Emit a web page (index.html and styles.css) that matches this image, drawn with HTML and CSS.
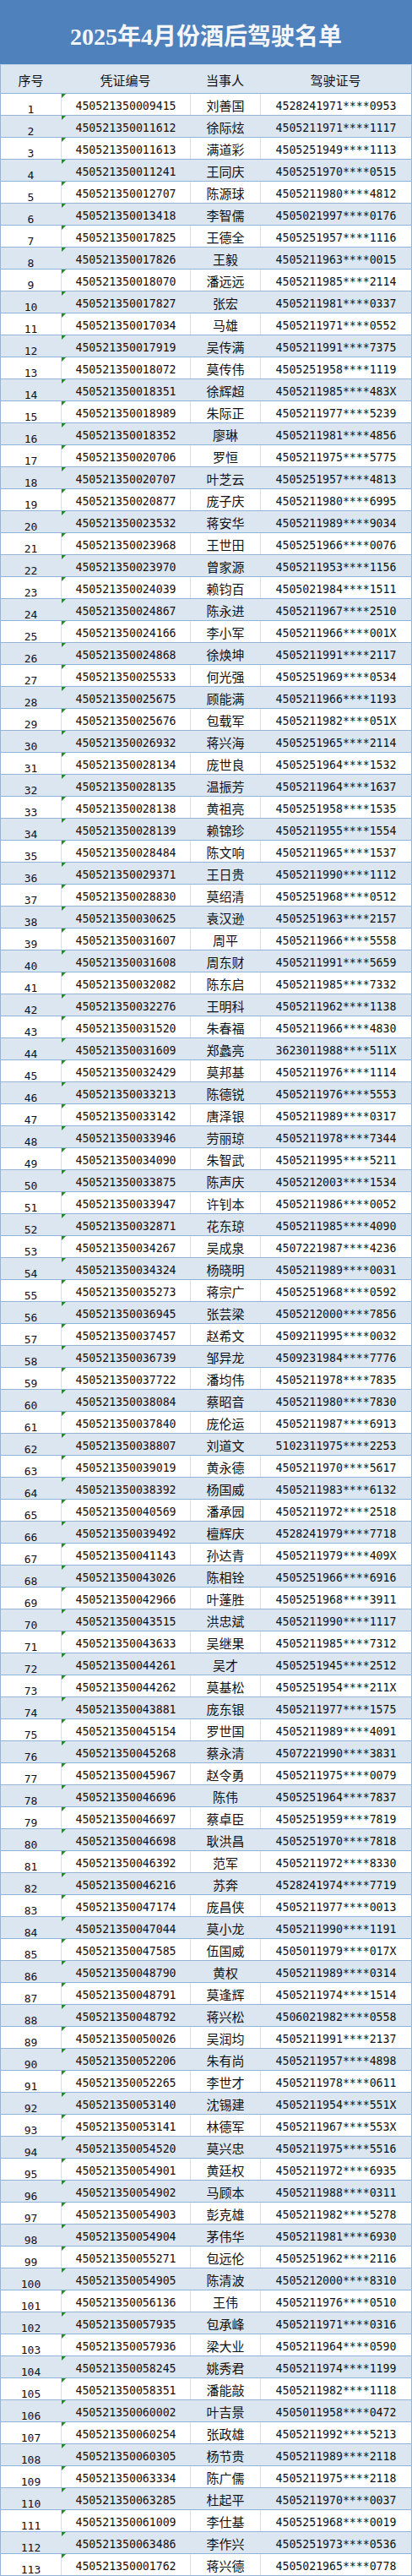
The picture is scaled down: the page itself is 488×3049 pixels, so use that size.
FILE: index.html
```html
<!DOCTYPE html>
<html lang="zh-CN">
<head>
<meta charset="utf-8">
<title>2025年4月份酒后驾驶名单</title>
<link rel="stylesheet" href="styles.css">
</head>
<body>
<div class="sheet">
  <div class="title">2025年4月份酒后驾驶名单</div>
  <div class="head">
    <div class="cell">序号</div>
    <div class="cell">凭证编号</div>
    <div class="cell">当事人</div>
    <div class="cell">驾驶证号</div>
  </div>
  <div class="row"><div class="cell no">1</div><div class="cell num cert">450521350009415</div><div class="cell name">刘善国</div><div class="cell num">4528241971****0953</div></div>
  <div class="row alt"><div class="cell no">2</div><div class="cell num cert">450521350011612</div><div class="cell name">徐际炫</div><div class="cell num">4505211971****1117</div></div>
  <div class="row"><div class="cell no">3</div><div class="cell num cert">450521350011613</div><div class="cell name">满道彩</div><div class="cell num">4505251949****1113</div></div>
  <div class="row alt"><div class="cell no">4</div><div class="cell num cert">450521350011241</div><div class="cell name">王同庆</div><div class="cell num">4505251970****0515</div></div>
  <div class="row"><div class="cell no">5</div><div class="cell num cert">450521350012707</div><div class="cell name">陈源球</div><div class="cell num">4505211980****4812</div></div>
  <div class="row alt"><div class="cell no">6</div><div class="cell num cert">450521350013418</div><div class="cell name">李智儒</div><div class="cell num">4505021997****0176</div></div>
  <div class="row"><div class="cell no">7</div><div class="cell num cert">450521350017825</div><div class="cell name">王德全</div><div class="cell num">4505251957****1116</div></div>
  <div class="row alt"><div class="cell no">8</div><div class="cell num cert">450521350017826</div><div class="cell name">王毅</div><div class="cell num">4505211963****0015</div></div>
  <div class="row"><div class="cell no">9</div><div class="cell num cert">450521350018070</div><div class="cell name">潘远远</div><div class="cell num">4505211985****2114</div></div>
  <div class="row alt"><div class="cell no">10</div><div class="cell num cert">450521350017827</div><div class="cell name">张宏</div><div class="cell num">4505211981****0337</div></div>
  <div class="row"><div class="cell no">11</div><div class="cell num cert">450521350017034</div><div class="cell name">马雄</div><div class="cell num">4505211971****0552</div></div>
  <div class="row alt"><div class="cell no">12</div><div class="cell num cert">450521350017919</div><div class="cell name">吴传满</div><div class="cell num">4505211991****7375</div></div>
  <div class="row"><div class="cell no">13</div><div class="cell num cert">450521350018072</div><div class="cell name">莫传伟</div><div class="cell num">4505251958****1119</div></div>
  <div class="row alt"><div class="cell no">14</div><div class="cell num cert">450521350018351</div><div class="cell name">徐辉超</div><div class="cell num">4505211985****483X</div></div>
  <div class="row"><div class="cell no">15</div><div class="cell num cert">450521350018989</div><div class="cell name">朱际正</div><div class="cell num">4505211977****5239</div></div>
  <div class="row alt"><div class="cell no">16</div><div class="cell num cert">450521350018352</div><div class="cell name">廖琳</div><div class="cell num">4505211981****4856</div></div>
  <div class="row"><div class="cell no">17</div><div class="cell num cert">450521350020706</div><div class="cell name">罗恒</div><div class="cell num">4505211975****5775</div></div>
  <div class="row alt"><div class="cell no">18</div><div class="cell num cert">450521350020707</div><div class="cell name">叶芝云</div><div class="cell num">4505251957****4813</div></div>
  <div class="row"><div class="cell no">19</div><div class="cell num cert">450521350020877</div><div class="cell name">庞子庆</div><div class="cell num">4505211980****6995</div></div>
  <div class="row alt"><div class="cell no">20</div><div class="cell num cert">450521350023532</div><div class="cell name">蒋安华</div><div class="cell num">4505211989****9034</div></div>
  <div class="row"><div class="cell no">21</div><div class="cell num cert">450521350023968</div><div class="cell name">王世田</div><div class="cell num">4505251966****0076</div></div>
  <div class="row alt"><div class="cell no">22</div><div class="cell num cert">450521350023970</div><div class="cell name">曾家源</div><div class="cell num">4505211953****1156</div></div>
  <div class="row"><div class="cell no">23</div><div class="cell num cert">450521350024039</div><div class="cell name">赖钧百</div><div class="cell num">4505021984****1511</div></div>
  <div class="row alt"><div class="cell no">24</div><div class="cell num cert">450521350024867</div><div class="cell name">陈永进</div><div class="cell num">4505211967****2510</div></div>
  <div class="row"><div class="cell no">25</div><div class="cell num cert">450521350024166</div><div class="cell name">李小军</div><div class="cell num">4505211966****001X</div></div>
  <div class="row alt"><div class="cell no">26</div><div class="cell num cert">450521350024868</div><div class="cell name">徐焕坤</div><div class="cell num">4505211991****2117</div></div>
  <div class="row"><div class="cell no">27</div><div class="cell num cert">450521350025533</div><div class="cell name">何光强</div><div class="cell num">4505251969****0534</div></div>
  <div class="row alt"><div class="cell no">28</div><div class="cell num cert">450521350025675</div><div class="cell name">顾能满</div><div class="cell num">4505211966****1193</div></div>
  <div class="row"><div class="cell no">29</div><div class="cell num cert">450521350025676</div><div class="cell name">包载军</div><div class="cell num">4505211982****051X</div></div>
  <div class="row alt"><div class="cell no">30</div><div class="cell num cert">450521350026932</div><div class="cell name">蒋兴海</div><div class="cell num">4505251965****2114</div></div>
  <div class="row"><div class="cell no">31</div><div class="cell num cert">450521350028134</div><div class="cell name">庞世良</div><div class="cell num">4505251964****1532</div></div>
  <div class="row alt"><div class="cell no">32</div><div class="cell num cert">450521350028135</div><div class="cell name">温振芳</div><div class="cell num">4505211964****1637</div></div>
  <div class="row"><div class="cell no">33</div><div class="cell num cert">450521350028138</div><div class="cell name">黄祖亮</div><div class="cell num">4505251958****1535</div></div>
  <div class="row alt"><div class="cell no">34</div><div class="cell num cert">450521350028139</div><div class="cell name">赖锦珍</div><div class="cell num">4505211955****1554</div></div>
  <div class="row"><div class="cell no">35</div><div class="cell num cert">450521350028484</div><div class="cell name">陈文响</div><div class="cell num">4505211965****1537</div></div>
  <div class="row alt"><div class="cell no">36</div><div class="cell num cert">450521350029371</div><div class="cell name">王日贵</div><div class="cell num">4505211990****1112</div></div>
  <div class="row"><div class="cell no">37</div><div class="cell num cert">450521350028830</div><div class="cell name">莫绍清</div><div class="cell num">4505251968****0512</div></div>
  <div class="row alt"><div class="cell no">38</div><div class="cell num cert">450521350030625</div><div class="cell name">袁汉逊</div><div class="cell num">4505251963****2157</div></div>
  <div class="row"><div class="cell no">39</div><div class="cell num cert">450521350031607</div><div class="cell name">周平</div><div class="cell num">4505211966****5558</div></div>
  <div class="row alt"><div class="cell no">40</div><div class="cell num cert">450521350031608</div><div class="cell name">周东财</div><div class="cell num">4505211991****5659</div></div>
  <div class="row"><div class="cell no">41</div><div class="cell num cert">450521350032082</div><div class="cell name">陈东启</div><div class="cell num">4505211985****7332</div></div>
  <div class="row alt"><div class="cell no">42</div><div class="cell num cert">450521350032276</div><div class="cell name">王明科</div><div class="cell num">4505211962****1138</div></div>
  <div class="row"><div class="cell no">43</div><div class="cell num cert">450521350031520</div><div class="cell name">朱春福</div><div class="cell num">4505211966****4830</div></div>
  <div class="row alt"><div class="cell no">44</div><div class="cell num cert">450521350031609</div><div class="cell name">郑蠡亮</div><div class="cell num">3623011988****511X</div></div>
  <div class="row"><div class="cell no">45</div><div class="cell num cert">450521350032429</div><div class="cell name">莫邦基</div><div class="cell num">4505211976****1114</div></div>
  <div class="row alt"><div class="cell no">46</div><div class="cell num cert">450521350033213</div><div class="cell name">陈德锐</div><div class="cell num">4505211976****5553</div></div>
  <div class="row"><div class="cell no">47</div><div class="cell num cert">450521350033142</div><div class="cell name">唐泽银</div><div class="cell num">4505211989****0317</div></div>
  <div class="row alt"><div class="cell no">48</div><div class="cell num cert">450521350033946</div><div class="cell name">劳丽琼</div><div class="cell num">4505211978****7344</div></div>
  <div class="row"><div class="cell no">49</div><div class="cell num cert">450521350034090</div><div class="cell name">朱智武</div><div class="cell num">4505211995****5211</div></div>
  <div class="row alt"><div class="cell no">50</div><div class="cell num cert">450521350033875</div><div class="cell name">陈声庆</div><div class="cell num">4505212003****1534</div></div>
  <div class="row"><div class="cell no">51</div><div class="cell num cert">450521350033947</div><div class="cell name">许钊本</div><div class="cell num">4505211986****0052</div></div>
  <div class="row alt"><div class="cell no">52</div><div class="cell num cert">450521350032871</div><div class="cell name">花东琼</div><div class="cell num">4505211985****4090</div></div>
  <div class="row"><div class="cell no">53</div><div class="cell num cert">450521350034267</div><div class="cell name">吴成泉</div><div class="cell num">4507221987****4236</div></div>
  <div class="row alt"><div class="cell no">54</div><div class="cell num cert">450521350034324</div><div class="cell name">杨晓明</div><div class="cell num">4505211989****0031</div></div>
  <div class="row"><div class="cell no">55</div><div class="cell num cert">450521350035273</div><div class="cell name">蒋宗广</div><div class="cell num">4505251968****0592</div></div>
  <div class="row alt"><div class="cell no">56</div><div class="cell num cert">450521350036945</div><div class="cell name">张芸梁</div><div class="cell num">4505212000****7856</div></div>
  <div class="row"><div class="cell no">57</div><div class="cell num cert">450521350037457</div><div class="cell name">赵希文</div><div class="cell num">4509211995****0032</div></div>
  <div class="row alt"><div class="cell no">58</div><div class="cell num cert">450521350036739</div><div class="cell name">邹异龙</div><div class="cell num">4509231984****7776</div></div>
  <div class="row"><div class="cell no">59</div><div class="cell num cert">450521350037722</div><div class="cell name">潘均伟</div><div class="cell num">4505211978****7835</div></div>
  <div class="row alt"><div class="cell no">60</div><div class="cell num cert">450521350038084</div><div class="cell name">蔡昭音</div><div class="cell num">4505211980****7830</div></div>
  <div class="row"><div class="cell no">61</div><div class="cell num cert">450521350037840</div><div class="cell name">庞伦运</div><div class="cell num">4505211987****6913</div></div>
  <div class="row alt"><div class="cell no">62</div><div class="cell num cert">450521350038807</div><div class="cell name">刘道文</div><div class="cell num">5102311975****2253</div></div>
  <div class="row"><div class="cell no">63</div><div class="cell num cert">450521350039019</div><div class="cell name">黄永德</div><div class="cell num">4505211970****5617</div></div>
  <div class="row alt"><div class="cell no">64</div><div class="cell num cert">450521350038392</div><div class="cell name">杨国威</div><div class="cell num">4505211983****6132</div></div>
  <div class="row"><div class="cell no">65</div><div class="cell num cert">450521350040569</div><div class="cell name">潘承园</div><div class="cell num">4505211972****2518</div></div>
  <div class="row alt"><div class="cell no">66</div><div class="cell num cert">450521350039492</div><div class="cell name">檀辉庆</div><div class="cell num">4528241979****7718</div></div>
  <div class="row"><div class="cell no">67</div><div class="cell num cert">450521350041143</div><div class="cell name">孙达青</div><div class="cell num">4505211979****409X</div></div>
  <div class="row alt"><div class="cell no">68</div><div class="cell num cert">450521350043026</div><div class="cell name">陈相铨</div><div class="cell num">4505251966****6916</div></div>
  <div class="row"><div class="cell no">69</div><div class="cell num cert">450521350042966</div><div class="cell name">叶蓬胜</div><div class="cell num">4505251968****3911</div></div>
  <div class="row alt"><div class="cell no">70</div><div class="cell num cert">450521350043515</div><div class="cell name">洪忠斌</div><div class="cell num">4505211990****1117</div></div>
  <div class="row"><div class="cell no">71</div><div class="cell num cert">450521350043633</div><div class="cell name">吴继果</div><div class="cell num">4505211985****7312</div></div>
  <div class="row alt"><div class="cell no">72</div><div class="cell num cert">450521350044261</div><div class="cell name">吴才</div><div class="cell num">4505251945****2512</div></div>
  <div class="row"><div class="cell no">73</div><div class="cell num cert">450521350044262</div><div class="cell name">莫基松</div><div class="cell num">4505251954****211X</div></div>
  <div class="row alt"><div class="cell no">74</div><div class="cell num cert">450521350043881</div><div class="cell name">庞东银</div><div class="cell num">4505211977****1575</div></div>
  <div class="row"><div class="cell no">75</div><div class="cell num cert">450521350045154</div><div class="cell name">罗世国</div><div class="cell num">4505211989****4091</div></div>
  <div class="row alt"><div class="cell no">76</div><div class="cell num cert">450521350045268</div><div class="cell name">蔡永清</div><div class="cell num">4507221990****3831</div></div>
  <div class="row"><div class="cell no">77</div><div class="cell num cert">450521350045967</div><div class="cell name">赵令勇</div><div class="cell num">4505211975****0079</div></div>
  <div class="row alt"><div class="cell no">78</div><div class="cell num cert">450521350046696</div><div class="cell name">陈伟</div><div class="cell num">4505251964****7837</div></div>
  <div class="row"><div class="cell no">79</div><div class="cell num cert">450521350046697</div><div class="cell name">蔡卓臣</div><div class="cell num">4505251959****7819</div></div>
  <div class="row alt"><div class="cell no">80</div><div class="cell num cert">450521350046698</div><div class="cell name">耿洪昌</div><div class="cell num">4505251970****7818</div></div>
  <div class="row"><div class="cell no">81</div><div class="cell num cert">450521350046392</div><div class="cell name">范军</div><div class="cell num">4505211972****8330</div></div>
  <div class="row alt"><div class="cell no">82</div><div class="cell num cert">450521350046216</div><div class="cell name">苏奔</div><div class="cell num">4528241974****7719</div></div>
  <div class="row"><div class="cell no">83</div><div class="cell num cert">450521350047174</div><div class="cell name">庞昌侠</div><div class="cell num">4505211977****0013</div></div>
  <div class="row alt"><div class="cell no">84</div><div class="cell num cert">450521350047044</div><div class="cell name">莫小龙</div><div class="cell num">4505211990****1191</div></div>
  <div class="row"><div class="cell no">85</div><div class="cell num cert">450521350047585</div><div class="cell name">伍国威</div><div class="cell num">4505011979****017X</div></div>
  <div class="row alt"><div class="cell no">86</div><div class="cell num cert">450521350048790</div><div class="cell name">黄权</div><div class="cell num">4505211989****0314</div></div>
  <div class="row"><div class="cell no">87</div><div class="cell num cert">450521350048791</div><div class="cell name">莫逢辉</div><div class="cell num">4505211974****1514</div></div>
  <div class="row alt"><div class="cell no">88</div><div class="cell num cert">450521350048792</div><div class="cell name">蒋兴松</div><div class="cell num">4506021982****0558</div></div>
  <div class="row"><div class="cell no">89</div><div class="cell num cert">450521350050026</div><div class="cell name">吴润均</div><div class="cell num">4505211991****2137</div></div>
  <div class="row alt"><div class="cell no">90</div><div class="cell num cert">450521350052206</div><div class="cell name">朱有尚</div><div class="cell num">4505211957****4898</div></div>
  <div class="row"><div class="cell no">91</div><div class="cell num cert">450521350052265</div><div class="cell name">李世才</div><div class="cell num">4505211978****0611</div></div>
  <div class="row alt"><div class="cell no">92</div><div class="cell num cert">450521350053140</div><div class="cell name">沈锡建</div><div class="cell num">4505211954****551X</div></div>
  <div class="row"><div class="cell no">93</div><div class="cell num cert">450521350053141</div><div class="cell name">林德军</div><div class="cell num">4505211967****553X</div></div>
  <div class="row alt"><div class="cell no">94</div><div class="cell num cert">450521350054520</div><div class="cell name">莫兴忠</div><div class="cell num">4505211975****5516</div></div>
  <div class="row"><div class="cell no">95</div><div class="cell num cert">450521350054901</div><div class="cell name">黄廷权</div><div class="cell num">4505211972****6935</div></div>
  <div class="row alt"><div class="cell no">96</div><div class="cell num cert">450521350054902</div><div class="cell name">马顾本</div><div class="cell num">4505211988****0311</div></div>
  <div class="row"><div class="cell no">97</div><div class="cell num cert">450521350054903</div><div class="cell name">彭克雄</div><div class="cell num">4505211982****5278</div></div>
  <div class="row alt"><div class="cell no">98</div><div class="cell num cert">450521350054904</div><div class="cell name">茅伟华</div><div class="cell num">4505211981****6930</div></div>
  <div class="row"><div class="cell no">99</div><div class="cell num cert">450521350055271</div><div class="cell name">包远伦</div><div class="cell num">4505251962****2116</div></div>
  <div class="row alt"><div class="cell no">100</div><div class="cell num cert">450521350054905</div><div class="cell name">陈清波</div><div class="cell num">4505212000****8310</div></div>
  <div class="row"><div class="cell no">101</div><div class="cell num cert">450521350056136</div><div class="cell name">王伟</div><div class="cell num">4505211976****0510</div></div>
  <div class="row alt"><div class="cell no">102</div><div class="cell num cert">450521350057935</div><div class="cell name">包承峰</div><div class="cell num">4505211971****0316</div></div>
  <div class="row"><div class="cell no">103</div><div class="cell num cert">450521350057936</div><div class="cell name">梁大业</div><div class="cell num">4505211964****0590</div></div>
  <div class="row alt"><div class="cell no">104</div><div class="cell num cert">450521350058245</div><div class="cell name">姚秀君</div><div class="cell num">4505211974****1199</div></div>
  <div class="row"><div class="cell no">105</div><div class="cell num cert">450521350058351</div><div class="cell name">潘能敲</div><div class="cell num">4505211982****1118</div></div>
  <div class="row alt"><div class="cell no">106</div><div class="cell num cert">450521350060002</div><div class="cell name">叶吉景</div><div class="cell num">4505011958****0472</div></div>
  <div class="row"><div class="cell no">107</div><div class="cell num cert">450521350060254</div><div class="cell name">张政雄</div><div class="cell num">4505211992****5213</div></div>
  <div class="row alt"><div class="cell no">108</div><div class="cell num cert">450521350060305</div><div class="cell name">杨节贵</div><div class="cell num">4505211989****2118</div></div>
  <div class="row"><div class="cell no">109</div><div class="cell num cert">450521350063334</div><div class="cell name">陈广儒</div><div class="cell num">4505211975****2118</div></div>
  <div class="row alt"><div class="cell no">110</div><div class="cell num cert">450521350063285</div><div class="cell name">杜起平</div><div class="cell num">4505211970****0037</div></div>
  <div class="row"><div class="cell no">111</div><div class="cell num cert">450521350061009</div><div class="cell name">李仕基</div><div class="cell num">4505251968****0019</div></div>
  <div class="row alt"><div class="cell no">112</div><div class="cell num cert">450521350063486</div><div class="cell name">李作兴</div><div class="cell num">4505251973****0536</div></div>
  <div class="row"><div class="cell no">113</div><div class="cell num cert">450521350001762</div><div class="cell name">蒋兴德</div><div class="cell num">4505021965****0778</div></div>
</div>
</body>
</html>
```

FILE: styles.css
```css
html, body {
  margin: 0;
  padding: 0;
  background: #ffffff;
}

.sheet {
  width: 488px;
  font-family: "Noto Sans CJK SC", sans-serif;
  color: #111111;
}

.title {
  height: 76px;
  box-sizing: border-box;
  padding-top: 6px;
  background: #4f81bd;
  color: #f4f6fa;
  font-family: "Liberation Serif", "Noto Sans CJK SC", serif;
  font-weight: 700;
  font-size: 28px;
  display: flex;
  align-items: center;
  justify-content: center;
}

.head,
.row {
  display: grid;
  grid-template-columns: 71px 153px 83px 179px;
  border-left: 1px solid #95b3d7;
  border-right: 1px solid #95b3d7;
  border-bottom: 1px solid #95b3d7;
}

.head {
  height: 35px;
  box-sizing: border-box;
  border-top: 1px solid #c6d6ea;
  background: #dce6f1;
  font-size: 15px;
}

.head .cell {
  padding-top: 2px;
}

.row {
  height: 26px;
  box-sizing: border-box;
  background: #ffffff;
}

.row.alt {
  background: #dce6f1;
}

.cell {
  display: flex;
  align-items: center;
  justify-content: center;
  white-space: nowrap;
  line-height: 1;
}

.row .cell + .cell {
  border-left: 1px solid #dadde2;
}

.row.alt .cell + .cell {
  border-left-color: #dce6f1;
}

.no {
  align-items: flex-end;
  font-family: "DejaVu Sans Mono", monospace;
  font-size: 13px;
  padding-bottom: 0;
}

.num {
  font-family: "DejaVu Sans Mono", monospace;
  font-size: 13.2px;
  padding-top: 4px;
  box-sizing: border-box;
}

.name {
  font-size: 15px;
  padding-top: 2px;
  box-sizing: border-box;
}

.cert {
  position: relative;
}

.cert::before {
  content: "";
  position: absolute;
  left: 0;
  top: 0;
  border-top: 5px solid #1f8b22;
  border-right: 5px solid transparent;
}
```
